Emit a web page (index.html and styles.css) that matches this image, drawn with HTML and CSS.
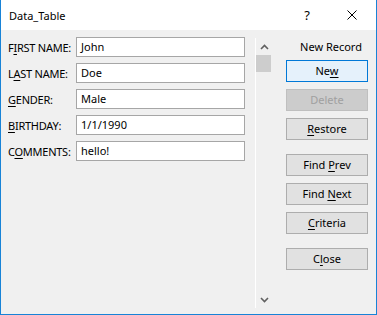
FILE: index.html
```html
<!DOCTYPE html>
<html>
<head>
<meta charset="utf-8">
<link rel="stylesheet" href="styles.css">
</head>
<body>
<div class="window">
  <div class="titlebar">
    <span class="title">Data_Table</span>
    <span class="help">?</span>
    <svg class="close" width="10" height="10" viewBox="0 0 10 10"><path d="M0.5 0.5 L9.5 9.5 M9.5 0.5 L0.5 9.5" stroke="#000" stroke-width="1" fill="none"/></svg>
  </div>
  <div class="content">
    <div class="form">
      <div class="row"><label class="lbl">F<u>I</u>RST NAME:</label><div class="field">John</div></div>
      <div class="row"><label class="lbl">L<u>A</u>ST NAME:</label><div class="field">Doe</div></div>
      <div class="row"><label class="lbl"><u>G</u>ENDER:</label><div class="field">Male</div></div>
      <div class="row"><label class="lbl"><u>B</u>IRTHDAY:</label><div class="field">1/1/1990</div></div>
      <div class="row"><label class="lbl">C<u>O</u>MMENTS:</label><div class="field">hello!</div></div>
    </div>
    <div class="scroll">
      <div class="arrow"><svg width="9" height="6" viewBox="0 0 9 6"><path d="M1 5 L4.5 1.5 L8 5" stroke="#606060" stroke-width="1.6" fill="none"/></svg></div>
      <div class="thumb"></div>
      <div class="track"></div>
      <div class="arrow"><svg width="9" height="6" viewBox="0 0 9 6"><path d="M1 1 L4.5 4.5 L8 1" stroke="#606060" stroke-width="1.6" fill="none"/></svg></div>
    </div>
    <div class="side">
      <div class="record">New Record</div>
      <div class="group">
        <div class="btn btn-focus">Ne<u>w</u></div>
        <div class="btn btn-disabled">Delete</div>
        <div class="btn"><u>R</u>estore</div>
      </div>
      <div class="group">
        <div class="btn">Find <u>P</u>rev</div>
        <div class="btn">Find <u>N</u>ext</div>
        <div class="btn"><u>C</u>riteria</div>
      </div>
      <div class="group">
        <div class="btn">C<u>l</u>ose</div>
      </div>
    </div>
  </div>
</div>
</body>
</html>
```
FILE: styles.css
```css
html, body {
  margin: 0;
  padding: 0;
  background: #ffffff;
}
.window {
  width: 377px;
  height: 315px;
  box-sizing: border-box;
  border: 1px solid #1883d7;
  border-top: none;
  display: flex;
  flex-direction: column;
  font-family: "Noto Sans", sans-serif;
  font-size: 11px;
  color: #000;
}
.titlebar {
  height: 30px;
  flex: none;
  background: #fff;
  display: flex;
  align-items: center;
  padding-left: 8px;
}
.title {
  font-size: 11px;
  flex: 1;
}
.help {
  font-size: 13px;
  margin-right: 37px;
}
.close {
  margin-right: 19px;
}
.content {
  flex: 1;
  background: #f0f0f0;
  display: flex;
}
.form {
  width: 248px;
  padding: 7px 0 0 7px;
  display: flex;
  flex-direction: column;
  gap: 6px;
}
.row {
  display: flex;
  align-items: center;
  height: 20px;
}
.lbl {
  width: 68px;
  flex: none;
  white-space: nowrap;
  letter-spacing: -0.25px;
}
.field {
  width: 169px;
  height: 20px;
  box-sizing: border-box;
  border: 1px solid #a6a6a6;
  background: #fff;
  padding-left: 4px;
  line-height: 18px;
}
.scroll {
  width: 16px;
  margin: 8px 0 6px 0;
  border-left: 1px solid #ffffff;
  display: flex;
  flex-direction: column;
}
.arrow {
  height: 17px;
  display: flex;
  align-items: center;
  justify-content: center;
}
.thumb {
  height: 17px;
  width: 15px;
  background: #cdcdcd;
}
.track {
  flex: 1;
}
.side {
  padding: 9px 0 0 14px;
  display: flex;
  flex-direction: column;
  gap: 14px;
}
.record {
  width: 90px;
  text-align: center;
  line-height: 16px;
  margin-bottom: -9px;
  white-space: nowrap;
}
.group {
  display: flex;
  flex-direction: column;
  gap: 7px;
}
.btn {
  width: 82px;
  height: 22px;
  box-sizing: border-box;
  border: 1px solid #adadad;
  background: #e1e1e1;
  text-align: center;
  line-height: 20px;
  white-space: nowrap;
}
.btn-focus {
  background: #e5f1fb;
  border-color: #0078d7;
}
.btn-disabled {
  background: #cccccc;
  border-color: #bfbfbf;
  color: #a0a0a0;
}
u {
  text-decoration-thickness: 1px;
  text-underline-offset: 2px;
}
```
